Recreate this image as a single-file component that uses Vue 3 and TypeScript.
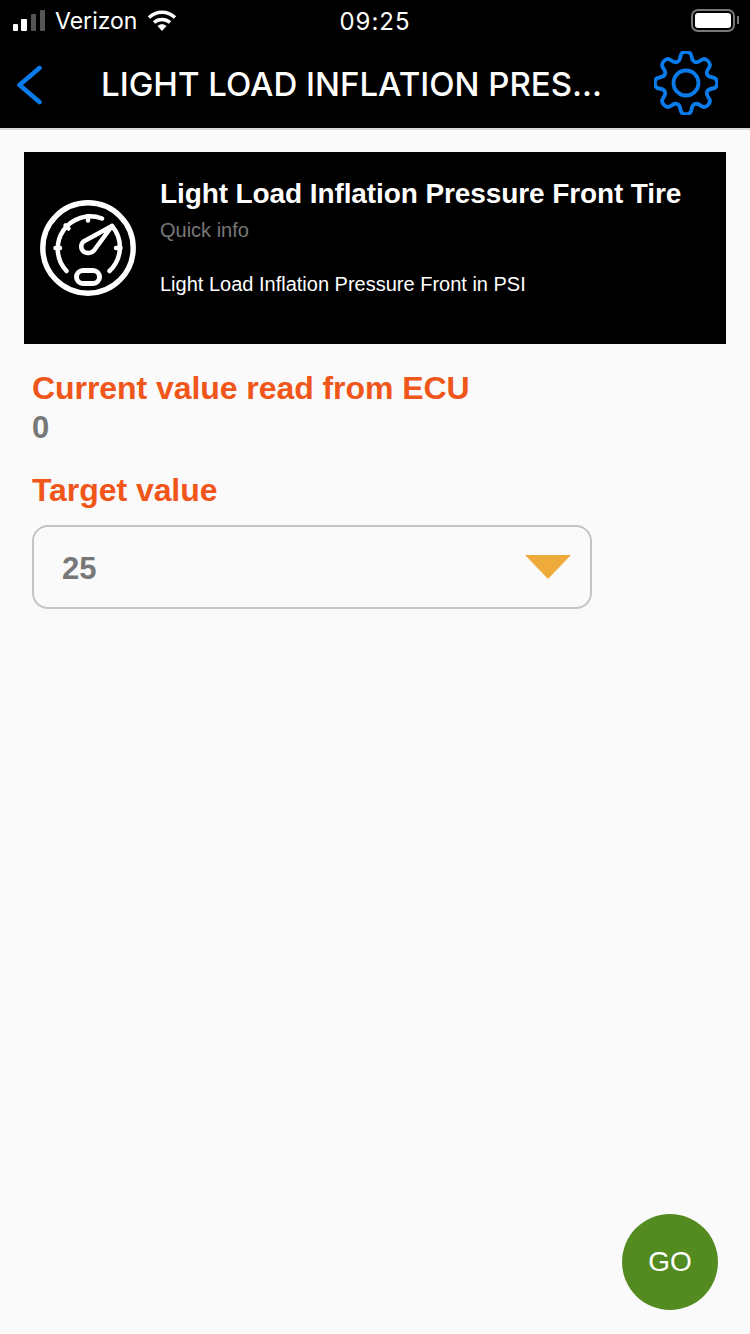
<script setup lang="ts">
// 8 tooth gear outline, centred on 32,32, corners rounded with Q
const gearPath = (() => {
  const teeth = 8
  const step = (Math.PI * 2) / teeth
  const verts: [number, number][] = []
  for (let i = 0; i < teeth; i++) {
    const a = i * step - Math.PI / 2
    const corners: [number, number][] = [
      [23, -0.34 * step],
      [31.5, -0.2 * step],
      [31.5, 0.2 * step],
      [23, 0.34 * step],
    ]
    for (const [r, off] of corners) {
      verts.push([32 + r * Math.cos(a + off), 32 + r * Math.sin(a + off)])
    }
  }
  const mid = (p: [number, number], q: [number, number]) =>
    `${((p[0] + q[0]) / 2).toFixed(2)} ${((p[1] + q[1]) / 2).toFixed(2)}`
  let d = `M${mid(verts[verts.length - 1], verts[0])}`
  verts.forEach((v, i) => {
    const next = verts[(i + 1) % verts.length]
    d += `Q${v[0].toFixed(2)} ${v[1].toFixed(2)} ${mid(v, next)}`
  })
  return d + "Z"
})()
</script>

<template>
  <div class="page">
    <header class="top">
      <div class="status">
        <div class="status-left">
          <div class="signal">
            <i class="bar bar-1"></i>
            <i class="bar bar-2"></i>
            <i class="bar bar-3"></i>
            <i class="bar bar-4"></i>
          </div>
          <span class="carrier">Verizon</span>
          <svg class="wifi" width="30" height="22" viewBox="0 0 30 22">
            <path d="M2 8.500C9.500 1.500 20.500 1.500 28 8.500" fill="none" stroke="#fff" stroke-width="3.400" />
            <path d="M7 13.500C11.500 9.500 18.500 9.500 23 13.500" fill="none" stroke="#fff" stroke-width="3.400" />
            <path d="M10.500 17 15 22l4.500-5C16.800 14.800 13.200 14.800 10.500 17Z" fill="#fff" />
          </svg>
        </div>
        <span class="clock">09:25</span>
        <div class="battery">
          <div class="battery-body"><div class="battery-fill"></div></div>
          <i class="battery-nub"></i>
        </div>
      </div>
      <nav class="nav">
        <button class="back" aria-label="Back">
          <svg width="26" height="40" viewBox="0 0 26 40" fill="none" stroke="#0a7bea" stroke-width="4.500" stroke-linecap="round" stroke-linejoin="round">
            <path d="M23.500 3 3.500 20l20 17" />
          </svg>
        </button>
        <h1 class="nav-title">LIGHT LOAD INFLATION PRES...</h1>
        <button class="gear" aria-label="Settings">
          <svg width="64" height="64" viewBox="0 0 64 64" fill="none" stroke="#0a7bea" stroke-width="3.800" stroke-linejoin="round">
            <path :d="gearPath" />
            <circle cx="32" cy="32" r="12.500" />
          </svg>
        </button>
      </nav>
    </header>

    <main class="content">
      <section class="info-card">
        <svg class="gauge" width="96" height="96" viewBox="0 0 96 96" fill="none" stroke="#fff" stroke-linecap="round" stroke-linejoin="round">
          <circle cx="48" cy="48" r="45.200" stroke-width="5.400" />
          <path d="M26.500 71A32.500 32.500 0 0 1 62 18.500M72 26A32.500 32.500 0 0 1 69.500 71" stroke-width="4.500" />
          <path d="M48 16v4.500M15.500 48H20M80.500 48H76M25.500 25.500l3 3" stroke-width="4.500" />
          <path d="M72 26 54 50.500c-2.500 3-7.500 3.500-10.500 1s-3-7.500 0-10Z" stroke-width="4.500" />
          <rect x="36.500" y="70.500" width="23" height="13" rx="6.500" stroke-width="5" />
        </svg>
        <div class="info-text">
          <h2 class="info-title">Light Load Inflation Pressure Front Tire</h2>
          <p class="info-sub">Quick info</p>
          <p class="info-desc">Light Load Inflation Pressure Front in PSI</p>
        </div>
      </section>

      <h3 class="label label-current">Current value read from ECU</h3>
      <p class="value">0</p>

      <h3 class="label label-target">Target value</h3>
      <div class="select">
        <span class="select-value">25</span>
        <i class="select-arrow"></i>
      </div>
    </main>

    <button class="go">GO</button>
  </div>
</template>

<style scoped>
.page {
  position: relative;
  height: 1334px;
  overflow: hidden;
  background: #fafafa;
  font-family: "Liberation Sans", Arial, sans-serif;
}

.top {
  background: #000;
  border-bottom: 2px solid #d8d8d8;
  color: #fff;
}

.status {
  height: 40px;
  display: grid;
  grid-template-columns: 1fr auto 1fr;
  align-items: center;
  font-family: Inter, sans-serif;
  font-size: 24px;
}

.status-left {
  display: flex;
  align-items: center;
  padding-left: 13px;
}

.signal {
  display: flex;
  align-items: flex-end;
  gap: 3px;
  height: 22px;
  margin-top: -1px;
}

.bar {
  display: block;
  width: 5px;
  border-radius: 1px;
  background: #fff;
}

.bar-1 { height: 7px; }
.bar-2 { height: 12px; width: 6px; }
.bar-3 { height: 17px; background: #555; margin-left: 1px; }
.bar-4 { height: 21px; background: #555; margin-left: 1px; }

.carrier {
  margin: 2px 0 0 10px;
  font-size: 23px;
}

.wifi {
  margin-left: 10px;
}

.clock {
  margin-top: 2px;
  letter-spacing: 1px;
}

.battery {
  display: flex;
  align-items: center;
  justify-content: flex-end;
  padding-right: 11px;
  gap: 2px;
}

.battery-body {
  width: 44px;
  height: 23px;
  box-sizing: border-box;
  border: 2px solid #777;
  border-radius: 7px;
  padding: 2px;
}

.battery-fill {
  width: 36px;
  height: 15px;
  border-radius: 3px;
  background: #fff;
}

.battery-nub {
  display: block;
  width: 2px;
  height: 8px;
  background: #777;
}

.nav {
  height: 88px;
  display: flex;
  align-items: center;
  padding-left: 16px;
}

.back,
.gear {
  display: flex;
  padding: 0;
  border: 0;
  background: none;
  flex: none;
}

.back {
  margin-top: 2px;
}

.nav-title {
  width: 503px;
  margin: 0 0 0 59px;
  font-family: Inter, sans-serif;
  font-size: 33px;
  font-weight: 500;
  line-height: 40px;
  white-space: nowrap;
}

.gear {
  margin: 0 0 2px 50px;
}

.content {
  display: flex;
  flex-direction: column;
  padding: 22px 24px 0;
}

.info-card {
  height: 192px;
  display: flex;
  align-items: flex-start;
  background: #000;
  color: #fff;
}

.gauge {
  flex: none;
  margin: 48px 0 0 16px;
}

.info-text {
  margin-left: 24px;
  padding-top: 26px;
}

.info-title {
  margin: 0;
  font-size: 28px;
  font-weight: 700;
  letter-spacing: -0.1px;
  line-height: 32px;
  white-space: nowrap;
}

.info-sub {
  margin: 8px 0 0;
  color: #777;
  font-size: 20px;
  line-height: 24px;
}

.info-desc {
  margin: 30px 0 0;
  font-size: 20px;
  line-height: 24px;
}

.label {
  margin: 0 0 0 8px;
  color: #f0561a;
  font-size: 32px;
  font-weight: 700;
  letter-spacing: -0.06px;
  line-height: 36px;
}

.label-current {
  margin-top: 26px;
}

.label-target {
  margin-top: 26px;
}

.value {
  margin: 4px 0 0 8px;
  color: #777;
  font-size: 31px;
  font-weight: 700;
  line-height: 36px;
}

.select {
  width: 560px;
  height: 84px;
  box-sizing: border-box;
  display: flex;
  align-items: center;
  justify-content: space-between;
  margin: 17px 0 0 8px;
  padding: 0 19px 0 28px;
  border: 2px solid #c4c4c4;
  border-radius: 16px;
}

.select-value {
  margin-top: 4px;
  color: #777;
  font-size: 31px;
  font-weight: 700;
}

.select-arrow {
  display: block;
  width: 0;
  height: 0;
  margin-top: -1px;
  border-top: 24px solid #eeab3c;
  border-left: 23px solid transparent;
  border-right: 23px solid transparent;
}

.go {
  position: absolute;
  left: 622px;
  top: 1214px;
  width: 96px;
  height: 96px;
  padding: 0;
  border: 0;
  border-radius: 50%;
  background: #548b20;
  color: #fff;
  font-family: "Liberation Sans", Arial, sans-serif;
  font-size: 28px;
}
</style>
